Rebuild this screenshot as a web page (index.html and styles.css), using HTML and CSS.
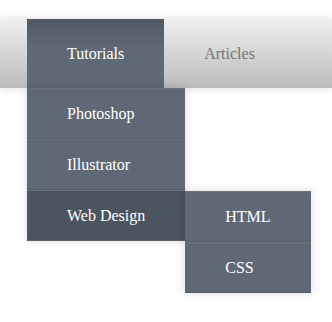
FILE: index.html
```html
<!DOCTYPE html>
<html lang="en">
<head>
    <meta charset="UTF-8">
    <meta name="viewport" content="width=device-width, initial-scale=1.0">
    <title>Dropdown Menu</title>
    <link rel="stylesheet" href="styles.css">
</head>
<body>

    <!-- Hauptnavigation -->
    <div class="menu">
        <div class="menu-bar">
            <div class="menu-item current">
                <a class="menu-link" href="#">Tutorials</a>
                <div class="panel">
                    <div class="panel-item"><a class="panel-link" href="#">Photoshop</a></div>
                    <div class="panel-item"><a class="panel-link" href="#">Illustrator</a></div>
                    <div class="panel-item selected">
                        <a class="panel-link" href="#">Web Design</a>
                        <div class="panel side">
                            <div class="panel-item"><a class="panel-link" href="#">HTML</a></div>
                            <div class="panel-item"><a class="panel-link" href="#">CSS</a></div>
                        </div>
                    </div>
                </div>
            </div>
            <div class="menu-item"><a class="menu-link" href="#">Articles</a></div>
        </div>
    </div>

</body>
</html>
```

FILE: styles.css
```css
html, body {
    min-height: 322px;
}

body {
    margin: 0;
    background-color: #fff;
    font-family: "Liberation Serif", "Times New Roman", serif;
    font-size: 16px;
}

/* Leiste */
.menu {
    padding-top: 19px;
    min-height: 303px;
}

.menu-bar {
    padding: 0 0 0 27px;
    display: flex;
    align-items: flex-start;
    background: linear-gradient(#efefef 0%, #bbbbbb 100%);
    box-shadow: 0 0 9px rgba(0, 0, 0, 0.15);
}

.menu-item {
    position: relative;
}

.menu-link {
    display: block;
    padding: 25px 40px;
    line-height: 19px;
    color: #757575;
    text-decoration: none;
}

.menu-item.current {
    background: linear-gradient(#4f5964 0%, #5f6975 40%);
}

.menu-item.current > .menu-link {
    color: #fff;
}

/* Ausklappmenue */
.panel {
    position: absolute;
    top: 100%;
    left: 0;
    z-index: 5;
    background-color: #5f6975;
    box-shadow: 0 0 9px rgba(0, 0, 0, 0.15);
    white-space: nowrap;
}

.panel.side {
    top: 0;
    left: 100%;
}

.panel-item {
    position: relative;
    border-top: 1px solid #6b727c;
    border-bottom: 1px solid #575f6a;
}

.panel-link {
    display: block;
    padding: 15px 40px;
    line-height: 19px;
    color: #fff;
    text-decoration: none;
}

.panel-item.selected {
    background-color: #4b545f;
}
```
